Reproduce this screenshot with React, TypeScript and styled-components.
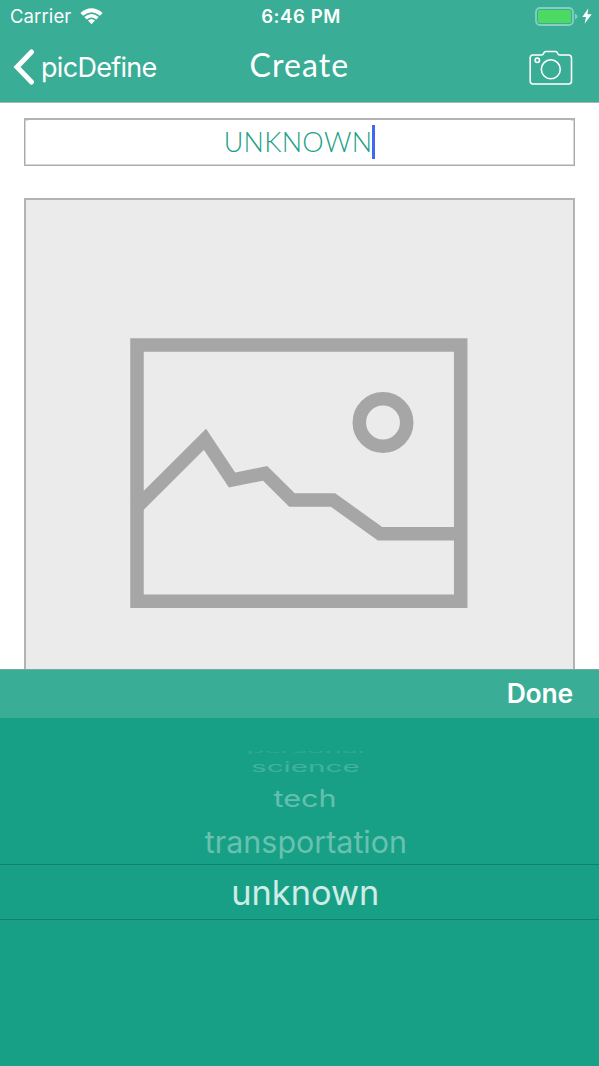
import React from "react";
import styled, { createGlobalStyle } from "styled-components";

const Global = createGlobalStyle`
  * { box-sizing: border-box; }
  body { margin: 0; background: #fff; font-family: Inter, "Liberation Sans", sans-serif; }
`;

const Screen = styled.div`
  width: 599px;
  height: 1066px;
  display: flex;
  flex-direction: column;
  overflow: hidden;
  background: #fff;
`;

const Header = styled.header`
  flex: none;
  height: 103px;
  background: #39ad95;
  border-bottom: 1px solid #a9b5b1;
  color: #fff;
`;

const StatusBar = styled.div`
  height: 32px;
  display: grid;
  grid-template-columns: 1fr auto 1fr;
  align-items: center;
  padding: 0 7px 0 10px;
`;

const StatusGroup = styled.div<{ $end?: boolean }>`
  display: flex;
  align-items: center;
  gap: ${(p) => (p.$end ? "4px" : "9px")};
  justify-content: ${(p) => (p.$end ? "flex-end" : "flex-start")};
`;

const Label = styled.span<{ $size: number; $weight?: number; $spacing?: number; $family?: string }>`
  font-size: ${(p) => p.$size}px;
  font-weight: ${(p) => p.$weight ?? 400};
  letter-spacing: ${(p) => p.$spacing ?? 0}px;
  font-family: ${(p) => p.$family ?? "inherit"};
  line-height: 1.2;
  white-space: nowrap;
`;

const NavBar = styled.nav`
  height: 70px;
  display: grid;
  grid-template-columns: 1fr auto 1fr;
  align-items: center;
  padding: 0 26px;
`;

const Back = styled.div`
  display: flex;
  align-items: center;
  gap: 6px;
  margin-left: -13px;
`;

const BackLabel = styled(Label)`
  padding-top: 2px;
`;

const Title = styled(Label)`
  padding-bottom: 3px;
`;

const NavEnd = styled.div`
  display: flex;
  justify-content: flex-end;
  padding-top: 1px;
`;

const Content = styled.main`
  flex: none;
  height: 566px;
  padding: 15px 24px 0;
  overflow: hidden;
`;

const Field = styled.div`
  height: 48px;
  display: flex;
  align-items: center;
  justify-content: center;
  border: 1px solid #ababab;
  border-top: 2px solid #b3b3b3;
  box-shadow: inset 0 0 0 1px #d6d6d6, inset 0 -1px 0 #d6d6d6;
  color: #18a086;
`;

const FieldInner = styled.div`
  align-self: stretch;
  flex: 1;
  margin: 0 1px 1px;
  display: flex;
  align-items: center;
  justify-content: center;
  border-radius: 4px;
  background: #fff;
`;

const Caret = styled.span`
  width: 3px;
  height: 34px;
  background: #4169ef;
`;

const Placeholder = styled.div`
  height: 551px;
  margin-top: 32px;
  border: 2px solid #b3b3b3;
  background: #ebebeb;
  padding: 138px 0 0 104px;
`;

const Toolbar = styled.div`
  flex: none;
  height: 49px;
  display: flex;
  align-items: center;
  justify-content: flex-end;
  padding-right: 26px;
  background: #39ad95;
  border-top: 1px solid #72aa9c;
  color: #fff;
`;

const Picker = styled.div`
  flex: 1;
  padding-top: 33px;
  background: #18a086;
`;

const Option = styled.div<{ $height: number; $color: string; $selected?: boolean }>`
  height: ${(p) => p.$height}px;
  display: flex;
  align-items: center;
  justify-content: center;
  overflow: hidden;
  padding-left: 12px;
  color: ${(p) => p.$color};
  border: 0 solid #12806b;
  border-width: ${(p) => (p.$selected ? "1px 0" : "0")};
`;

const Wheel = styled.span<{ $sx: number; $sy: number; $dy?: number }>`
  font-size: 34px;
  line-height: 40px;
  white-space: nowrap;
  flex: none;
  transform: translateY(${(p) => p.$dy ?? 0}px) scale(${(p) => p.$sx}, ${(p) => p.$sy});
`;

const options = [
  { text: "personal", height: 3, color: "#34a892", sx: 0.85, sy: 0.2, dy: -2 },
  { text: "science", height: 23, color: "#43b29d", sx: 0.87, sy: 0.4, dy: 1 },
  { text: "tech", height: 40, color: "#64bfae", sx: 0.9, sy: 0.7, dy: 1.5 },
  { text: "transportation", height: 47, color: "#69c1b0", sx: 0.895, sy: 0.89, dy: 1.5 },
];

const raleStack = 'Lato, "Liberation Sans", sans-serif';

export default function App() {
  return (
    <>
      <Global />
      <Screen>
        <Header>
          <StatusBar>
            <StatusGroup>
              <Label $size={18.5} $spacing={0.1}>Carrier</Label>
              <svg width="23" height="17" viewBox="0 0 23 17" fill="#fff">
                <path d="M0.4 4.9Q11.5-4.4 22.6 4.9L19.9 7.8Q11.5.7 3.1 7.8Z" />
                <path d="M4.3 8.9Q11.5 2.9 18.7 8.9L16.2 11.5Q11.5 7.6 6.8 11.5Z" />
                <path d="M8 12.6Q11.5 9.6 15 12.6L11.5 16.2Z" />
              </svg>
            </StatusGroup>
            <Label $size={18.5} $weight={600} $spacing={0.6}>6:46 PM</Label>
            <StatusGroup $end>
              <svg width="43" height="19" viewBox="0 0 43 19">
                <rect x="1" y="1" width="37" height="17" rx="4" fill="none" stroke="#88cfbf" strokeWidth="1.8" />
                <rect x="3" y="3" width="33" height="13" rx="1.5" fill="#4cd964" />
                <path d="M40 6.5Q42.5 8 42.5 9.5T40 12.5Z" fill="#88cfbf" />
              </svg>
              <svg width="10" height="16" viewBox="0 0 10 16" fill="#fff">
                <path d="M6.3.3L.3 9H4L2.6 15.7L9.7 6.3H5.5Z" />
              </svg>
            </StatusGroup>
          </StatusBar>
          <NavBar>
            <Back>
              <svg width="22" height="36" viewBox="0 0 22 36" fill="none" stroke="#fff" strokeWidth="5">
                <path d="M18.5 3L4 18L18.5 33" strokeLinecap="round" />
              </svg>
              <BackLabel $size={27} $spacing={-0.7}>picDefine</BackLabel>
            </Back>
            <Title $size={32} $spacing={1.1} $family={raleStack}>Create</Title>
            <NavEnd>
              <svg width="44" height="36" viewBox="0 0 44 36" fill="none" stroke="#fff" strokeWidth="1.6">
                <path d="M4 5H12.5Q14 5 14.7 3.2Q15.3 1.5 17 1.5H26.5Q28 1.5 28.6 3.2Q29.3 5 30.8 5H39.5Q42.5 5 42.5 8V31Q42.5 34 39.5 34H4Q1.2 34 1.2 31V8Q1.2 5 4 5Z" />
                <circle cx="21.8" cy="19.3" r="9.5" />
                <circle cx="8.3" cy="10.3" r="2.2" />
              </svg>
            </NavEnd>
          </NavBar>
        </Header>
        <Content>
          <Field>
            <FieldInner>
              <Label $size={27} $weight={300} $spacing={0.3} $family={raleStack}>UNKNOWN</Label>
              <Caret />
            </FieldInner>
          </Field>
          <Placeholder>
            <svg width="338" height="270" viewBox="0 0 338 270" fill="none" stroke="#a6a6a6" strokeWidth="13.5">
              <path d="M7 6.9H330.7V263.2H7Z" />
              <path d="M7 169L75 101.3L102 142L135 135.3L162 162H203L250 195.7H331" />
              <circle cx="253" cy="84.5" r="23.7" />
            </svg>
          </Placeholder>
        </Content>
        <Toolbar>
          <Label $size={26.5} $weight={600} $spacing={-0.2}>Done</Label>
        </Toolbar>
        <Picker>
          {options.map((o) => (
            <Option key={o.text} $height={o.height} $color={o.color}>
              <Wheel $sx={o.sx} $sy={o.sy} $dy={o.dy}>{o.text}</Wheel>
            </Option>
          ))}
          <Option $height={56} $color="#d1ece7" $selected>
            <Wheel $sx={1.01} $sy={1.02} $dy={1}>unknown</Wheel>
          </Option>
        </Picker>
      </Screen>
    </>
  );
}
